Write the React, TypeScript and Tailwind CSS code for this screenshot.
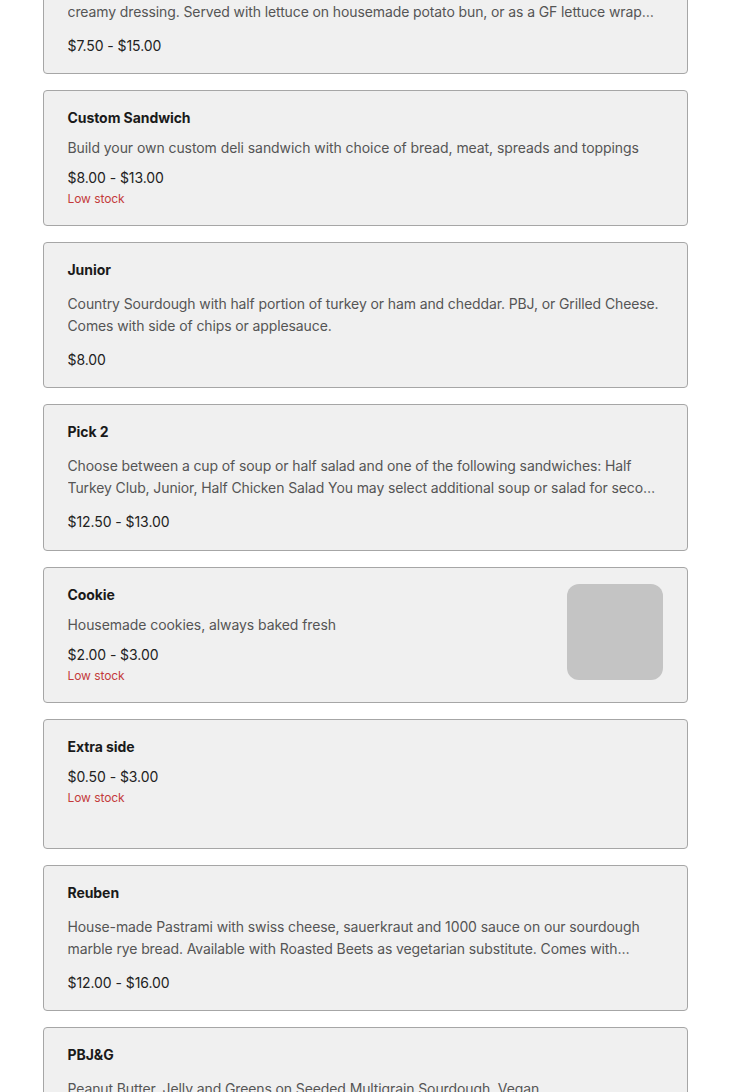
type Item = {
  name: string
  description?: string
  price: string
  lowStock?: boolean
  image?: boolean
}

const items: Item[] = [
  {
    name: 'Chicken Salad Sandwich',
    description:
      'House-made chicken salad with celery, grapes, toasted almonds and our signature herb creamy dressing. Served with lettuce on housemade potato bun, or as a GF lettuce wrap with a side of chips',
    price: '$7.50 - $15.00',
  },
  {
    name: 'Custom Sandwich',
    description: 'Build your own custom deli sandwich with choice of bread, meat, spreads and toppings',
    price: '$8.00 - $13.00',
    lowStock: true,
  },
  {
    name: 'Junior',
    description:
      'Country Sourdough with half portion of turkey or ham and cheddar. PBJ, or Grilled Cheese. Comes with side of chips or applesauce.',
    price: '$8.00',
  },
  {
    name: 'Pick 2',
    description:
      'Choose between a cup of soup or half salad and one of the following sandwiches: Half Turkey Club, Junior, Half Chicken Salad You may select additional soup or salad for second choice instead of a sandwich.',
    price: '$12.50 - $13.00',
  },
  {
    name: 'Cookie',
    description: 'Housemade cookies, always baked fresh',
    price: '$2.00 - $3.00',
    lowStock: true,
    image: true,
  },
  {
    name: 'Extra side',
    price: '$0.50 - $3.00',
    lowStock: true,
  },
  {
    name: 'Reuben',
    description:
      'House-made Pastrami with swiss cheese, sauerkraut and 1000 sauce on our sourdough marble rye bread. Available with Roasted Beets as vegetarian substitute. Comes with choice of chips or applesauce.',
    price: '$12.00 - $16.00',
  },
  {
    name: 'PBJ&G',
    description:
      'Peanut Butter, Jelly and Greens on Seeded Multigrain Sourdough. Vegan\nComes with a side of chips or applesauce.',
    price: '$9.00',
  },
]

// single-line descriptions sit tighter than clamped two-line ones
const shortDescs = ['Custom Sandwich', 'Cookie']

function MenuCard({ item }: { item: Item }) {
  const short = shortDescs.includes(item.name)
  const long = !!item.description && !short
  const pad = item.name === 'Pick 2' ? 'pb-[18px]' : long ? 'pb-[17px]' : 'pb-4'
  return (
    <div className={`flex min-h-[130px] gap-4 rounded-[4px] border border-[#a6a6a6] bg-[#f0f0f0] px-6 pt-4 ${pad}`}>
      <div className="min-w-0 flex-1 pt-[1px]">
        <h3 className="text-sm leading-5 font-bold text-[#1a1a1a]">{item.name}</h3>
        {item.description &&
          (short ? (
            <p className="mt-[10px] text-sm leading-5 text-[#555555]">{item.description}</p>
          ) : (
            <p className="my-[13px] line-clamp-2 text-sm leading-[22px] tracking-[-0.11px] whitespace-pre-line text-[#555555]">
              {item.description}
            </p>
          ))}
        <p className={`${long ? '' : 'mt-[10px]'} text-sm leading-5 text-[#222222]`}>{item.price}</p>
        {item.lowStock && <p className="mt-[1px] text-xs leading-5 text-[#c43b3b]">Low stock</p>}
      </div>
      {item.image && <div className="h-24 w-24 shrink-0 rounded-xl bg-[#c4c4c4]" />}
    </div>
  )
}

export default function App() {
  return (
    <div className="min-h-screen bg-white font-['Inter','Noto_Sans',sans-serif] tracking-[-0.07px]">
      {/* list is scrolled, first card is partly off the top */}
      <div className="mx-auto -mt-[72px] flex w-[645px] flex-col gap-4 pb-10">
        {items.map((item) => (
          <MenuCard key={item.name} item={item} />
        ))}
      </div>
    </div>
  )
}
